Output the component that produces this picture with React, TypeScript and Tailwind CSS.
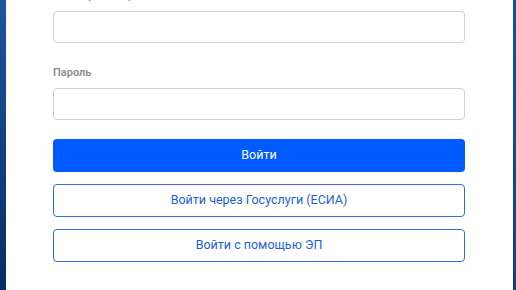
import React from "react";

export default function App() {
  return (
    <div
      className="flex h-[290px] w-[516px] overflow-hidden"
      style={{ fontFamily: "Roboto, 'Noto Sans', sans-serif" }}
    >
      <div className="w-[6px] shrink-0 bg-gradient-to-b from-[#1c56a0] to-[#0a2c66]" />
      <div className="flex flex-1 flex-col bg-white pl-[47px] pr-[48px]">
        <div className="-mt-[12px] h-[16px] text-[11px] font-semibold leading-[16px] text-[#8c8c8c]">
          Логин (СНИЛС)
        </div>
        <div className="mt-[7px] h-[32px] rounded-[4px] border border-[#d2d2d2] bg-white" />
        <div className="mt-[22px] h-[16px] text-[11px] font-semibold leading-[16px] text-[#8c8c8c]">
          Пароль
        </div>
        <div className="mt-[7px] h-[32px] rounded-[4px] border border-[#d2d2d2] bg-white" />
        <button className="mt-[19px] flex h-[33px] items-center justify-center rounded-[4px] bg-[#005cff] text-[12.5px] text-white">
          Войти
        </button>
        <button className="mt-[12px] flex h-[33px] items-center justify-center rounded-[4px] border border-[#2f6ee0] bg-white text-[12.5px] text-[#1d5fd6]">
          Войти через Госуслуги (ЕСИА)
        </button>
        <button className="mt-[12px] flex h-[33px] items-center justify-center rounded-[4px] border border-[#2f6ee0] bg-white text-[12.5px] text-[#1d5fd6]">
          Войти с помощью ЭП
        </button>
      </div>
      <div className="w-[3px] shrink-0 bg-gradient-to-b from-[#1d5096] to-[#173f7a]" />
    </div>
  );
}
